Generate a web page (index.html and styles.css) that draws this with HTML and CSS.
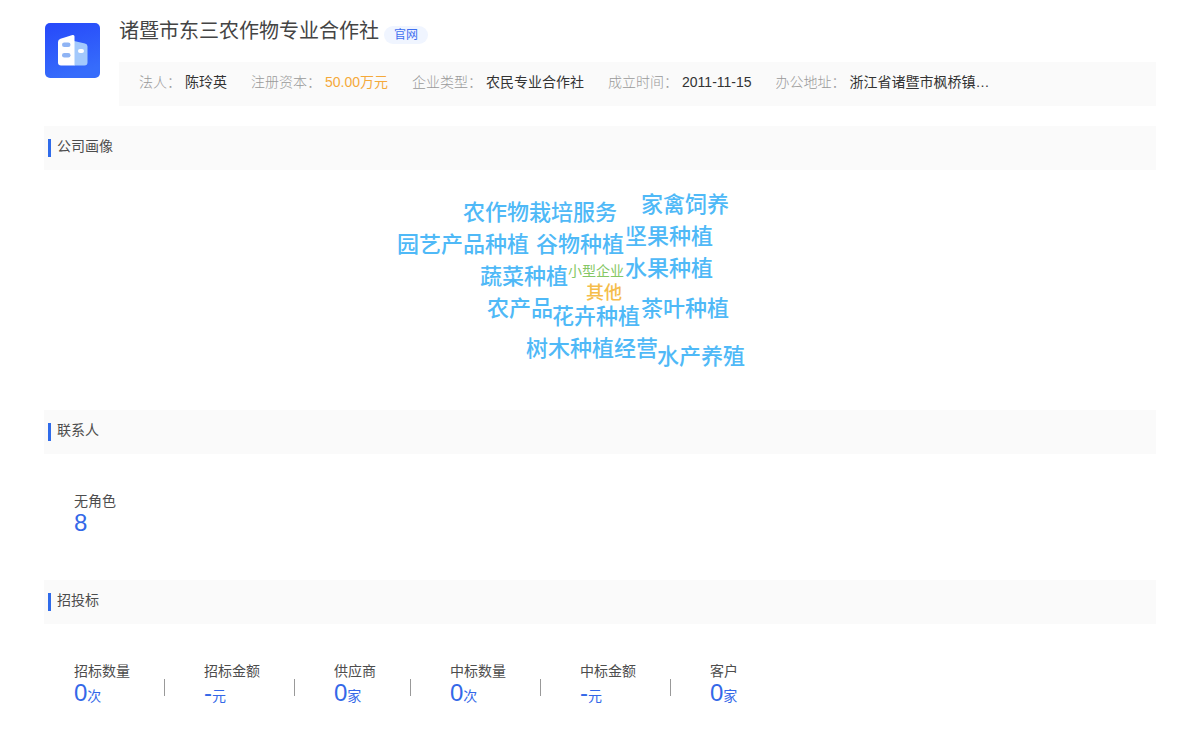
FILE: index.html
```html
<!DOCTYPE html>
<html lang="zh-CN">
<head>
<meta charset="utf-8">
<meta name="viewport" content="width=device-width, initial-scale=1">
<title>诸暨市东三农作物专业合作社</title>
<link rel="stylesheet" href="styles.css">
</head>
<body>
<main class="page">
  <header class="company">
    <svg class="logo" viewBox="0 0 55 55" aria-hidden="true">
      <defs>
        <linearGradient id="logo-bg" x1="0" y1="0" x2="0.3" y2="1">
          <stop offset="0" stop-color="#2648fa"/>
          <stop offset="1" stop-color="#366cfb"/>
        </linearGradient>
      </defs>
      <rect width="55" height="55" rx="5" fill="url(#logo-bg)"/>
      <path d="M29 18 L40 20.500 Q42.500 21 42.500 23.500 V39.500 Q42.500 42.500 39.500 42.500 H29 Z" fill="#a3c9fc"/>
      <path d="M13 19 Q13 16.500 15.500 15.700 L27.500 12.100 Q29.500 11.600 29.500 13.500 V42.500 H16 Q13 42.500 13 39.500 Z" fill="#fff"/>
      <rect x="17" y="19.500" width="8.500" height="4.500" rx="2.250" fill="#8fb4f4"/>
      <rect x="17" y="30" width="8.500" height="4.500" rx="2.250" fill="#8fb4f4"/>
      <rect x="33" y="26" width="6" height="4" rx="2" fill="#fff"/>
    </svg>
    <div class="company-body">
      <div class="title-row">
        <h1 class="title">诸暨市东三农作物专业合作社</h1>
        <a class="site-link" href="#">官网</a>
      </div>
      <dl class="facts">
        <div class="fact"><dt>法人：</dt><dd>陈玲英</dd></div>
        <div class="fact"><dt>注册资本：</dt><dd class="money">50.00万元</dd></div>
        <div class="fact"><dt>企业类型：</dt><dd>农民专业合作社</dd></div>
        <div class="fact"><dt>成立时间：</dt><dd>2011-11-15</dd></div>
        <div class="fact"><dt>办公地址：</dt><dd>浙江省诸暨市枫桥镇…</dd></div>
      </dl>
    </div>
  </header>

  <section>
    <h2 class="section-title">公司画像</h2>
    <div class="cloud">
      <span class="word w-crops">农作物栽培服务</span>
      <span class="word w-poultry">家禽饲养</span>
      <span class="word w-garden">园艺产品种植</span>
      <span class="word w-grain">谷物种植</span>
      <span class="word w-nuts">坚果种植</span>
      <span class="word w-vegetables">蔬菜种植</span>
      <span class="word w-size">小型企业</span>
      <span class="word w-fruit">水果种植</span>
      <span class="word w-other">其他</span>
      <span class="word w-produce">农产品</span>
      <span class="word w-flowers">花卉种植</span>
      <span class="word w-tea">茶叶种植</span>
      <span class="word w-trees">树木种植经营</span>
      <span class="word w-aquatic">水产养殖</span>
    </div>
  </section>

  <section>
    <h2 class="section-title">联系人</h2>
    <dl class="stats">
      <div class="stat"><dt>无角色</dt><dd>8</dd></div>
    </dl>
  </section>

  <section>
    <h2 class="section-title">招投标</h2>
    <dl class="stats">
      <div class="stat"><dt>招标数量</dt><dd>0<small>次</small></dd></div>
      <div class="stat"><dt>招标金额</dt><dd>-<small>元</small></dd></div>
      <div class="stat"><dt>供应商</dt><dd>0<small>家</small></dd></div>
      <div class="stat"><dt>中标数量</dt><dd>0<small>次</small></dd></div>
      <div class="stat"><dt>中标金额</dt><dd>-<small>元</small></dd></div>
      <div class="stat"><dt>客户</dt><dd>0<small>家</small></dd></div>
    </dl>
  </section>
</main>
</body>
</html>
```
FILE: styles.css
```css
* {
  box-sizing: border-box;
}

body,
h1,
h2,
dl,
dd {
  margin: 0;
}

body {
  background: #fff;
  color: #333;
  font: 14px/20px "Liberation Sans", "Noto Sans CJK SC", sans-serif;
}

.page {
  padding: 16px 44px 0;
}

.company {
  display: flex;
  gap: 19px;
  padding-left: 1px;
  margin-bottom: 20px;
}

.logo {
  flex: none;
  width: 55px;
  height: 55px;
  margin-top: 7px;
}

.company-body {
  flex: 1;
  min-width: 0;
}

.title-row {
  display: flex;
  align-items: center;
  gap: 5px;
  height: 30px;
  margin-bottom: 16px;
}

.title {
  color: #444;
  font-size: 20px;
  line-height: 30px;
  font-weight: 400;
}

.site-link {
  margin-top: 8px;
  padding: 0 10px;
  border-radius: 9px;
  background: #f0f5ff;
  color: #3f6ff0;
  font-size: 12px;
  line-height: 18px;
  text-decoration: none;
}

.facts {
  display: flex;
  flex-wrap: wrap;
  column-gap: 24px;
  padding: 10px 20px 14px;
  background: #fafafa;
}

.fact {
  display: flex;
  gap: 4px;
}

.fact dt {
  color: #999;
  font-weight: 300;
}

.fact .money {
  color: #f5a93a;
}

.section-title {
  display: flex;
  align-items: center;
  gap: 6px;
  height: 44px;
  padding: 0 4px 4px;
  background: #fafafa;
  color: #4d4d4d;
  font-size: 14px;
  font-weight: 400;
}

.section-title::before {
  content: "";
  width: 3px;
  height: 18px;
  margin-top: 4px;
  background: #2f6bea;
}

.cloud {
  position: relative;
  width: 480px;
  height: 240px;
  margin: 0 auto;
  color: #4fb9f7;
  font-size: 22px;
  font-weight: 500;
  line-height: 32px;
}

.word {
  position: absolute;
  white-space: nowrap;
}

.w-crops { left: 103px; top: 27px; }
.w-poultry { left: 281px; top: 19px; }
.w-garden { left: 37px; top: 59px; }
.w-grain { left: 176px; top: 59px; }
.w-nuts { left: 265px; top: 51px; }
.w-vegetables { left: 120px; top: 91px; }
.w-size { left: 208px; top: 85px; color: #85c765; font-size: 14px; font-weight: 400; }
.w-fruit { left: 265px; top: 83px; }
.w-other { left: 226px; top: 107px; color: #f5bd4b; font-size: 18px; }
.w-produce { left: 127px; top: 123px; }
.w-flowers { left: 192px; top: 131px; }
.w-tea { left: 281px; top: 123px; }
.w-trees { left: 166px; top: 163px; }
.w-aquatic { left: 297px; top: 171px; }

.stats {
  display: flex;
  flex-wrap: wrap;
  padding: 37px 30px 45px;
}

.stat {
  display: flex;
  flex-direction: column;
}

.stat + .stat {
  position: relative;
  margin-left: 34px;
  padding-left: 40px;
}

.stat + .stat::before {
  content: "";
  position: absolute;
  left: 0;
  top: 18px;
  width: 1px;
  height: 17px;
  background: #999;
}

.stat dt {
  color: #4d4d4d;
}

.stat dd {
  color: #3468e8;
  font-size: 24px;
  line-height: 24px;
}

.stat small {
  font-size: 14px;
}
```
